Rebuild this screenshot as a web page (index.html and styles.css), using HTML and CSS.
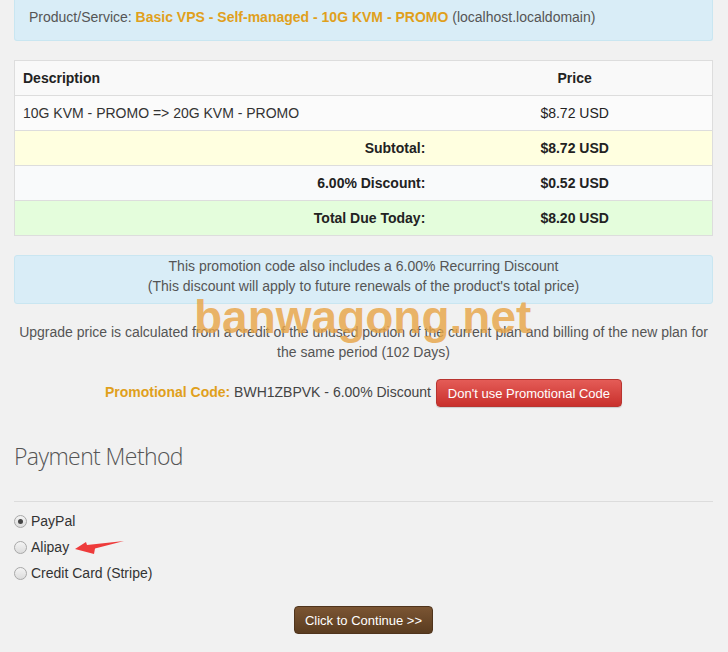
FILE: index.html
```html
<!DOCTYPE html>
<html lang="en">
<head>
    <meta charset="UTF-8">
    <meta name="viewport" content="width=device-width, initial-scale=1.0">
    <title>Upgrade Order</title>
    <link rel="stylesheet" href="styles.css">
</head>
<body>
    <div class="page">
        <div class="alert alert-product">
            Product/Service: <strong class="orange">Basic VPS - Self-managed - 10G KVM - PROMO</strong> (localhost.localdomain)
        </div>

        <table class="summary">
            <thead>
                <tr>
                    <th class="desc">Description</th>
                    <th class="price">Price</th>
                </tr>
            </thead>
            <tbody>
                <tr>
                    <td class="desc">10G KVM - PROMO =&gt; 20G KVM - PROMO</td>
                    <td class="price">$8.72 USD</td>
                </tr>
                <tr class="subtotal">
                    <td class="label">Subtotal:</td>
                    <td class="price">$8.72 USD</td>
                </tr>
                <tr class="discount">
                    <td class="label">6.00% Discount:</td>
                    <td class="price">$0.52 USD</td>
                </tr>
                <tr class="total">
                    <td class="label">Total Due Today:</td>
                    <td class="price">$8.20 USD</td>
                </tr>
            </tbody>
        </table>

        <div class="alert alert-recurring">
            This promotion code also includes a 6.00% Recurring Discount<br>
            (This discount will apply to future renewals of the product's total price)
        </div>

        <p class="upgrade-note">Upgrade price is calculated from a credit of the unused portion of the current plan and billing of the new plan for the same period (102 Days)</p>

        <div class="promo">
            <strong class="orange">Promotional Code:</strong> BWH1ZBPVK - 6.00% Discount
            <button class="btn btn-danger">Don't use Promotional Code</button>
        </div>

        <h2 class="section-title">Payment Method</h2>
        <hr>

        <div class="gateways">
            <label><input type="radio" name="gateway" checked> PayPal</label>
            <label class="alipay"><input type="radio" name="gateway"> Alipay
                <svg class="arrow" width="50" height="15" viewBox="0 0 50 15">
                    <path d="M0 9 L11 2 L12 5 L49 1 L20 8.5 L19 14 Z" fill="#ee3b3b"/>
                </svg>
            </label>
            <label><input type="radio" name="gateway"> Credit Card (Stripe)</label>
        </div>

        <div class="continue">
            <button class="btn btn-brown">Click to Continue &gt;&gt;</button>
        </div>

        <div class="watermark">banwagong.net</div>
    </div>
</body>
</html>
```

FILE: styles.css
```css
* {
    box-sizing: border-box;
}

body {
    margin: 0;
    background-color: #f1f1f1;
    font-family: "Liberation Sans", Arial, sans-serif;
    font-size: 14px;
    line-height: 20px;
    color: #444;
}

.page {
    position: relative;
    margin: 0 15px 0 14px;
}

.orange {
    color: #e0a01c;
}

.alert {
    background-color: #d9edf7;
    border: 1px solid #c9e6f1;
    border-radius: 3px;
    color: #555;
}

.alert-product {
    border-top: none;
    border-radius: 0 0 3px 3px;
    padding: 7px 14px 13px;
}

.summary {
    width: 100%;
    margin-top: 19px;
    border-collapse: collapse;
    background-color: #fbfbfb;
    border: 1px solid #ddd;
}

.summary th,
.summary td {
    padding: 8px 8px;
    line-height: 18px;
    border-top: 1px solid #ddd;
    color: #222;
}

.summary th {
    font-weight: bold;
    background-color: #f9f9f9;
}

.summary td.desc {
    color: #333;
}

.summary .desc {
    text-align: left;
}

.summary .price {
    width: 40%;
    text-align: center;
    padding-right: 4px;
}

.summary .label {
    text-align: right;
}

.summary tr.subtotal td,
.summary tr.discount td,
.summary tr.total td {
    font-weight: bold;
}

.summary tr.subtotal td {
    background-color: #ffffe0;
}

.summary tr.discount td {
    background-color: #f9fafb;
}

.summary tr.total td {
    background-color: #e4fddc;
}

.alert-recurring {
    margin-top: 19px;
    padding: 0 15px 7px;
    text-align: center;
}

.upgrade-note {
    margin: 18px 0 0;
    text-align: center;
    color: #555;
}

.promo {
    margin-top: 17px;
    text-align: center;
    color: #444;
}

.btn {
    font-family: "Liberation Sans", Arial, sans-serif;
    font-size: 13px;
    line-height: 19px;
    color: #fff;
    border-radius: 4px;
    cursor: pointer;
    vertical-align: middle;
}

.btn-danger {
    padding: 4px 11px 3px;
    background: linear-gradient(#e45c57, #c9302c);
    border: 1px solid #b83430;
    box-shadow: 0 1px 1px rgba(0, 0, 0, 0.15);
    margin-left: 1px;
}

.section-title {
    margin: 33px 0 0;
    font-family: "Open Sans", sans-serif;
    font-weight: 300;
    font-size: 23px;
    letter-spacing: -0.6px;
    line-height: 32px;
    color: #555;
}

hr {
    margin: 29px 0 0;
    border: none;
    border-top: 1px solid #dcdcdc;
}

.gateways {
    margin-top: 6px;
}

.gateways label {
    display: flex;
    align-items: center;
    height: 26px;
    color: #333;
}

.gateways input {
    appearance: none;
    width: 13px;
    height: 13px;
    margin: 0 4px 0 0;
    border: 1px solid #a8a8a8;
    border-radius: 50%;
    background: linear-gradient(#f4f4f4, #dcdcdc);
    position: relative;
}

.gateways input:checked::after {
    content: "";
    position: absolute;
    left: 3px;
    top: 3px;
    width: 5px;
    height: 5px;
    border-radius: 50%;
    background-color: #444;
}

.arrow {
    margin-left: 6px;
    margin-top: 1px;
}

.continue {
    margin-top: 20px;
    text-align: center;
}

.btn-brown {
    padding: 4px 10px 3px;
    background: linear-gradient(#7b5533, #5a3c20);
    border: 1px solid #4f341c;
}

.watermark {
    position: absolute;
    left: 180px;
    top: 292px;
    font-family: "Liberation Sans", Arial, sans-serif;
    font-weight: bold;
    font-size: 46px;
    line-height: 50px;
    color: rgba(232, 165, 72, 0.82);
    pointer-events: none;
}
```
